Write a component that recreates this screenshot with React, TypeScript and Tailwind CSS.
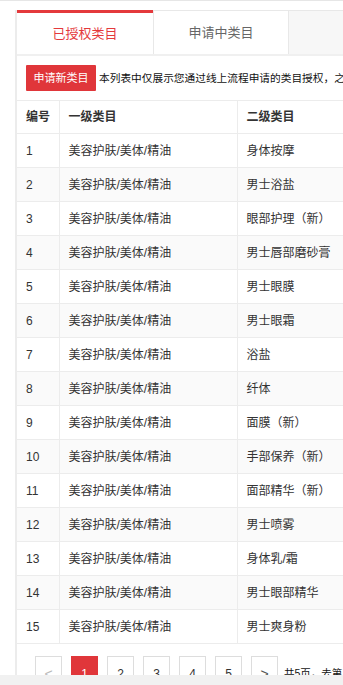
const rows = [
  '身体按摩',
  '男士浴盐',
  '眼部护理（新）',
  '男士唇部磨砂膏',
  '男士眼膜',
  '男士眼霜',
  '浴盐',
  '纤体',
  '面膜（新）',
  '手部保养（新）',
  '面部精华（新）',
  '男士喷雾',
  '身体乳/霜',
  '男士眼部精华',
  '男士爽身粉',
]

const font = { fontFamily: '"Liberation Sans", "Noto Sans CJK SC", sans-serif' }

export default function App() {
  return (
    <div className="w-[343px] h-[685px] overflow-hidden bg-white text-[#333]" style={font}>
      <div className="h-[675px] overflow-hidden border-t border-[#e6e6e6]">
        <div className="mt-[9px] ml-[15px] w-[700px] border-l-2 border-[#ececec] h-full">
          {/* Tabs */}
          <div className="flex h-[46px] border-b-2 border-[#f0f0f0]">
            <div className="w-[136px] border-t-[3px] border-[#e4393c] bg-white flex items-center justify-center text-[13px] text-[#e4393c]">
              已授权类目
            </div>
            <div className="w-[136px] border-t border-l border-r border-[#e8e8e8] bg-white flex items-center justify-center text-[13px] text-[#666]">
              申请中类目
            </div>
            <div className="flex-1 border-t border-[#e8e8e8] bg-[#f7f7f7]"></div>
          </div>

          {/* Notice */}
          <div className="flex items-center pl-[9px] pt-[9px] pb-[9px]">
            <button className="h-[26px] w-[70px] bg-[#e0363a] text-white text-[11px] rounded-[1px]">申请新类目</button>
            <span className="ml-[3px] text-[10.7px] text-[#111] whitespace-nowrap">
              本列表中仅展示您通过线上流程申请的类目授权，之前通过线下申请的类目不在此列表中展示
            </span>
          </div>

          {/* Table */}
          <table className="border-collapse text-[12px] text-[#333]">
            <thead>
              <tr className="h-[33px] bg-white">
                <th className="w-[42px] border border-[#ececec] border-l-0 text-left font-bold pl-[9px]">编号</th>
                <th className="w-[178px] border border-[#ececec] text-left font-bold pl-[9px]">一级类目</th>
                <th className="w-[300px] border border-[#ececec] text-left font-bold pl-[9px]">二级类目</th>
              </tr>
            </thead>
            <tbody>
              {rows.map((name, i) => (
                <tr key={i} className={i % 2 === 1 ? 'h-[34px] bg-[#fafafa]' : 'h-[34px] bg-white'}>
                  <td className="border border-[#ececec] border-l-0 pl-[9px]">{i + 1}</td>
                  <td className="border border-[#ececec] pl-[9px]">美容护肤/美体/精油</td>
                  <td className="border border-[#ececec] pl-[9px]">{name}</td>
                </tr>
              ))}
            </tbody>
          </table>

          {/* Pagination */}
          <div className="flex items-center gap-[9px] pl-[18px] pt-[12px] text-[12px]">
            <span className="w-[27px] h-[36px] border border-[#ddd] flex items-center justify-center text-[#bbb] text-[14px]">&lt;</span>
            <span className="w-[27px] h-[36px] bg-[#e0363a] text-white flex items-center justify-center">1</span>
            {[2, 3, 4, 5].map((n) => (
              <span key={n} className="w-[27px] h-[36px] border border-[#ddd] flex items-center justify-center text-[#333]">{n}</span>
            ))}
            <span className="w-[27px] h-[36px] border border-[#ddd] flex items-center justify-center text-[#555] text-[14px]">&gt;</span>
            <span className="-ml-[3px] text-[10.5px] text-[#111] whitespace-nowrap">共5页，去第</span>
            <span className="-ml-[8px] w-[30px] h-[28px] border border-[#ccc]"></span>
          </div>
        </div>
      </div>
      <div className="h-[10px] bg-[#f1f1f1]"></div>
    </div>
  )
}
